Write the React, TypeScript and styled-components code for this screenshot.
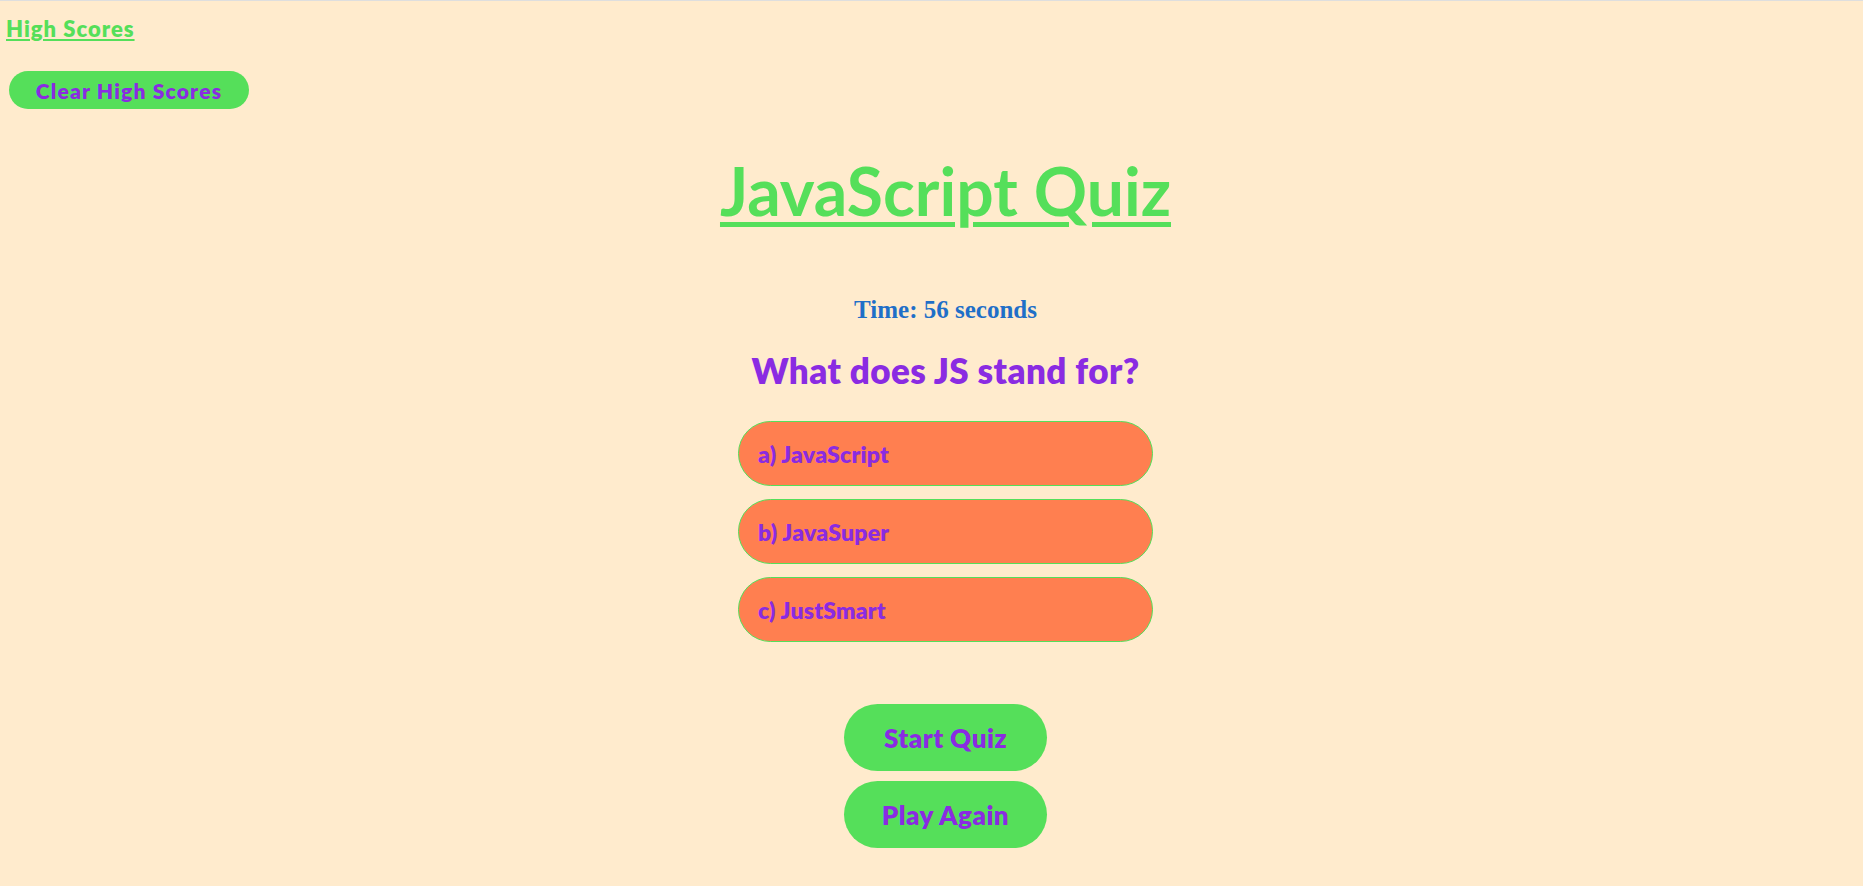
import React from 'react'
import styled, { createGlobalStyle } from 'styled-components'

const green = '#55df5a'
const purple = '#8a2be2'
const coral = '#ff7f50'
const cream = '#ffebcd'
const blue = '#1f6fc8'

const GlobalStyle = createGlobalStyle`
  html, body {
    margin: 0;
    padding: 0;
    background: ${cream};
  }
  body {
    border-top: 1px solid #dedede;
    min-height: 885px;
    font-family: Lato, "Open Sans", sans-serif;
  }
`

const Page = styled.div`
  display: flex;
  flex-direction: column;
`

const TopBar = styled.nav`
  display: flex;
  flex-direction: column;
  align-items: flex-start;
  padding: 16px 0 0 6px;
`

const ScoresLink = styled.a`
  color: ${green};
  font-size: 22px;
  font-weight: 800;
  letter-spacing: 1px;
  line-height: 24px;
  text-decoration: underline;
  cursor: pointer;
`

const ClearButton = styled.button`
  margin: 30px 0 0 3px;
  width: 240px;
  height: 38px;
  border: none;
  border-radius: 19px;
  background: ${green};
  color: ${purple};
  font-family: inherit;
  font-size: 21px;
  font-weight: 800;
  letter-spacing: 1.2px;
`

const Main = styled.main`
  display: flex;
  flex-direction: column;
  align-items: center;
  padding-left: 28px;
`

const Title = styled.h1`
  margin: 42px 0 0;
  color: ${green};
  font-size: 66px;
  line-height: 80px;
  font-weight: 700;
  text-decoration: underline;
  text-decoration-thickness: 5px;
  text-underline-offset: 6px;
`

const Timer = styled.p`
  margin: 64px 0 0;
  color: ${blue};
  font-family: "Liberation Serif", "Times New Roman", serif;
  font-size: 25px;
  font-weight: 700;
  line-height: 30px;
`

const Question = styled.h2`
  margin: 25px 0 0;
  color: ${purple};
  font-size: 35px;
  line-height: 40px;
  font-weight: 800;
  letter-spacing: 0.4px;
`

const Answers = styled.div`
  display: flex;
  flex-direction: column;
  gap: 13px;
  margin-top: 31px;
`

const Answer = styled.button`
  width: 415px;
  height: 65px;
  padding: 0 0 0 19px;
  text-align: left;
  border: 1.5px solid ${green};
  border-radius: 33px;
  background: ${coral};
  color: ${purple};
  font-family: inherit;
  font-size: 23px;
  font-weight: 800;
  letter-spacing: 0.2px;
`

const Controls = styled.div`
  display: flex;
  flex-direction: column;
  align-items: center;
  gap: 10px;
  margin-top: 62px;
`

const BigButton = styled.button`
  width: 203px;
  height: 67px;
  border: none;
  border-radius: 34px;
  background: ${green};
  color: ${purple};
  font-family: inherit;
  font-size: 26px;
  font-weight: 800;
  letter-spacing: 0.5px;
`

const answers = ['a) JavaScript', 'b) JavaSuper', 'c) JustSmart']

const App: React.FC = () => (
  <>
    <GlobalStyle />
    <Page>
      <TopBar>
        <ScoresLink>High Scores</ScoresLink>
        <ClearButton>Clear High Scores</ClearButton>
      </TopBar>
      <Main>
        <Title>JavaScript Quiz</Title>
        <Timer>Time: 56 seconds</Timer>
        <Question>What does JS stand for?</Question>
        <Answers>
          {answers.map((a) => (
            <Answer key={a}>{a}</Answer>
          ))}
        </Answers>
        <Controls>
          <BigButton>Start Quiz</BigButton>
          <BigButton>Play Again</BigButton>
        </Controls>
      </Main>
    </Page>
  </>
)

export default App
